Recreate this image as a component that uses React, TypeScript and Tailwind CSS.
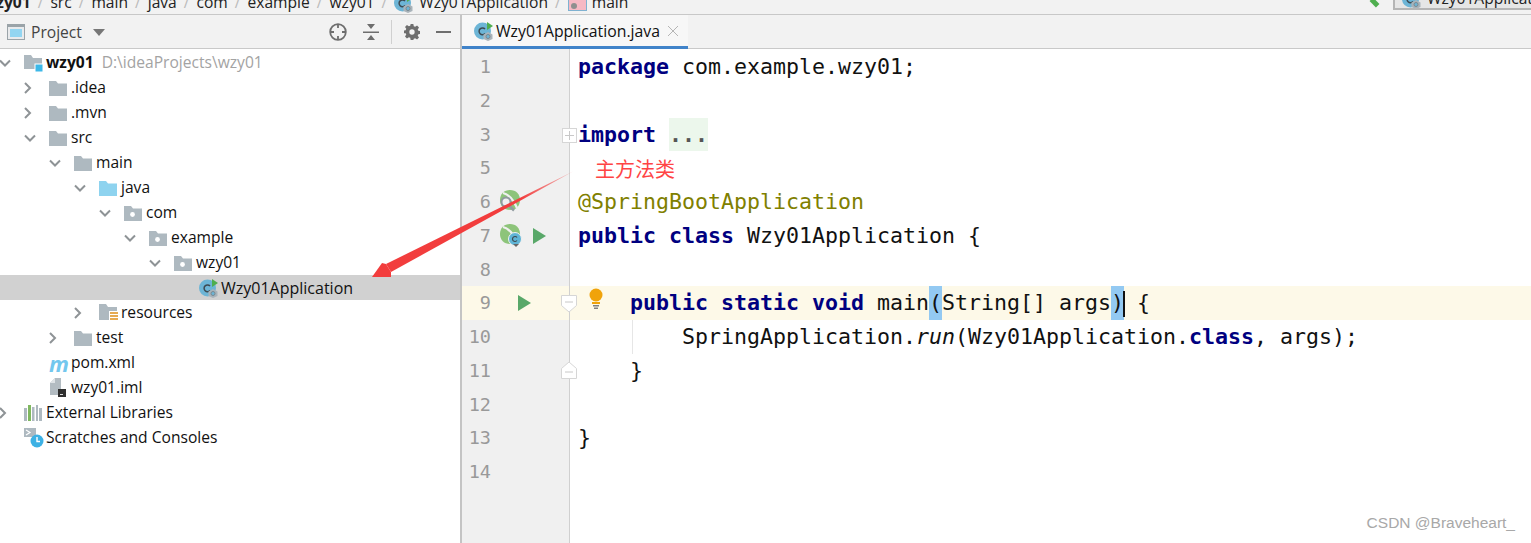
import type { ReactNode } from 'react'

const uiFont = 'font-["Open_Sans","Noto_Sans_CJK_SC",sans-serif]'
const monoFont = 'font-["DejaVu_Sans_Mono",monospace]'

type IconKind = 'module' | 'folder' | 'source' | 'package' | 'app' | 'resources' | 'maven' | 'iml' | 'libs' | 'scratch'

interface TreeRow {
  label: string
  depth: number
  icon: IconKind
  open?: boolean
  leaf?: boolean
  hint?: string
  bold?: boolean
  selected?: boolean
}

const rows: TreeRow[] = [
  { label: 'wzy01', depth: 0, icon: 'module', open: true, bold: true, hint: 'D:\\ideaProjects\\wzy01' },
  { label: '.idea', depth: 1, icon: 'folder' },
  { label: '.mvn', depth: 1, icon: 'folder' },
  { label: 'src', depth: 1, icon: 'folder', open: true },
  { label: 'main', depth: 2, icon: 'folder', open: true },
  { label: 'java', depth: 3, icon: 'source', open: true },
  { label: 'com', depth: 4, icon: 'package', open: true },
  { label: 'example', depth: 5, icon: 'package', open: true },
  { label: 'wzy01', depth: 6, icon: 'package', open: true },
  { label: 'Wzy01Application', depth: 7, icon: 'app', leaf: true, selected: true },
  { label: 'resources', depth: 3, icon: 'resources' },
  { label: 'test', depth: 2, icon: 'folder' },
  { label: 'pom.xml', depth: 1, icon: 'maven', leaf: true },
  { label: 'wzy01.iml', depth: 1, icon: 'iml', leaf: true },
  { label: 'External Libraries', depth: 0, icon: 'libs' },
  { label: 'Scratches and Consoles', depth: 0, icon: 'scratch', leaf: true },
]

function Folder({ fill = '#aeb9c0', children }: { fill?: string; children?: ReactNode }) {
  return (
    <svg width="18" height="16" viewBox="0 0 18 16">
      <path d="M0 1h7l2 2.500h9V16H0z" fill={fill} />
      {children}
    </svg>
  )
}

function AppIcon() {
  return (
    <svg width="20" height="20" viewBox="0 0 20 20">
      <circle cx="8.500" cy="10" r="8.500" fill="#6db5d6" />
      <path d="M11 8a3.400 3.400 0 1 0 0 4.600" fill="none" stroke="#3d4a52" strokeWidth="1.500" />
      <path d="M13 1l6 4-6 4z" fill="#4fae4f" />
      <path d="M14 11l4.500 2.500v4.500l-4.500 2-4.500-2v-4.500z" fill="#a9b3ba" />
      <circle cx="14" cy="15.500" r="2" fill="#6db5d6" stroke="#7b8990" />
    </svg>
  )
}

function NodeIcon({ kind }: { kind: IconKind }) {
  switch (kind) {
    case 'module':
      return (
        <svg width="20" height="20" viewBox="0 0 20 20">
          <path d="M0 2h7l2 3h9v11H0z" fill="#aeb9c0" />
          <rect x="11" y="11" width="8" height="8" fill="#3db8e8" stroke="#fff" />
        </svg>
      )
    case 'folder':
      return <Folder />
    case 'source':
      return <Folder fill="#8ed3ef" />
    case 'package':
      return (
        <Folder>
          <circle cx="8.500" cy="9.500" r="2.400" fill="#fff" />
        </Folder>
      )
    case 'app':
      return <AppIcon />
    case 'resources':
      return (
        <svg width="20" height="18" viewBox="0 0 20 18">
          <path d="M0 0h7l2 3h9v13H0z" fill="#aeb9c0" />
          <rect x="10" y="7" width="9" height="11" fill="#fff" />
          <path d="M11 9h8M11 12h8M11 15h8" stroke="#e5aa52" strokeWidth="1.800" />
        </svg>
      )
    case 'maven':
      return <span className="text-[22px] leading-[20px] font-bold italic text-[#73c7ee]">m</span>
    case 'iml':
      return (
        <svg width="18" height="19" viewBox="0 0 18 19">
          <path d="M1 5l5-5h6v17H1z" fill="#b3bcc2" />
          <path d="M1 5h5V0z" fill="#dfe3e6" />
          <rect x="9" y="11" width="8" height="8" fill="#2f2f2f" />
          <rect x="11" y="16" width="3" height="1" fill="#ddd" />
        </svg>
      )
    case 'libs':
      return (
        <svg width="18" height="16" viewBox="0 0 18 16">
          <rect x="0" y="3" width="3" height="13" fill="#aeb9c0" />
          <rect x="4" y="0" width="3" height="16" fill="#7fb85f" />
          <rect x="8" y="2" width="2.500" height="14" fill="#aeb9c0" />
          <rect x="12" y="0" width="2" height="16" fill="#aeb9c0" />
          <rect x="15" y="3" width="3" height="13" fill="#aeb9c0" />
        </svg>
      )
    case 'scratch':
      return (
        <svg width="20" height="20" viewBox="0 0 20 20">
          <path d="M0 0h12v9H0z" fill="#aeb9c0" />
          <path d="M2 2l4 2.500-4 2.500" fill="none" stroke="#fff" strokeWidth="1.200" />
          <circle cx="13" cy="13" r="6.500" fill="#3db1e4" />
          <path d="M13 9v4.500h3" fill="none" stroke="#fff" strokeWidth="1.400" />
        </svg>
      )
  }
}

function Chevron({ open }: { open?: boolean }) {
  return (
    <svg width="12" height="12" viewBox="0 0 12 12" fill="none" stroke="#8e9396" strokeWidth="2">
      {open ? <path d="M1 3.500l5 5 5-5" /> : <path d="M3 1l5 5-5 5" />}
    </svg>
  )
}

function Row({ row }: { row: TreeRow }) {
  return (
    <div className={`h-[25px] flex items-center overflow-hidden ${row.selected ? 'bg-[#d1d1d1]' : ''}`}>
      {/* the tree indents by 25px a level, first chevron hangs off the window edge */}
      <div className="flex items-center" style={{ marginLeft: 25 * row.depth - 8 }}>
        <div className={`w-[32px] shrink-0 flex ${row.open ? 'pl-[7px]' : 'pl-[5px]'}`}>{!row.leaf && <Chevron open={row.open} />}</div>
        <div className="w-[22px] h-[20px] shrink-0 flex items-center">
          <NodeIcon kind={row.icon} />
        </div>
        <span className={`leading-none whitespace-nowrap text-[#111] ${row.selected ? 'text-[16px]' : 'text-[15.600px]'} ${row.bold ? 'font-bold' : ''}`}>
          {row.label}
        </span>
        {row.hint && <span className="ml-[8px] text-[15.600px] leading-none text-[#a3a3a3] whitespace-nowrap">{row.hint}</span>}
      </div>
    </div>
  )
}

function ProjectHeader() {
  return (
    <div className="h-[34px] bg-[#f2f2f2] border-b border-[#c9c9c9] flex items-center">
      <svg className="ml-[7px]" width="18" height="16" viewBox="0 0 18 16">
        <rect x="0.500" y="0.500" width="17" height="15" fill="#e8eaec" stroke="#9aa3a8" />
        <rect x="0" y="0" width="18" height="3" fill="#9aa3a8" />
        <rect x="3" y="5" width="12" height="8" fill="#92d5f1" />
      </svg>
      <span className="ml-[6px] mt-[2px] text-[15.600px] text-[#444]">Project</span>
      <svg className="ml-[11px] mt-[2px]" width="12" height="7" viewBox="0 0 12 7">
        <path d="M0 0h12L6 7z" fill="#777" />
      </svg>
      <div className="ml-auto flex items-center mr-[9px]">
        <svg width="18" height="18" viewBox="0 0 18 18" fill="none" stroke="#6e6e6e" strokeWidth="1.800">
          <circle cx="9" cy="9" r="7.800" />
          <path d="M9 1v4M9 13v4M1 9h4M13 9h4" />
        </svg>
        <svg className="ml-[16px]" width="16" height="16" viewBox="0 0 16 16">
          <path d="M0 7.500h16v1.500H0z" fill="#6e6e6e" />
          <path d="M4 0h8L8 5zM4 16h8l-4-5z" fill="#6e6e6e" />
        </svg>
        <div className="ml-[12px] h-[24px] w-px bg-[#d0d0d0]" />
        <svg className="ml-[12px]" width="16" height="16" viewBox="0 0 24 24">
          <path
            fillRule="evenodd"
            fill="#6e6e6e"
            d="M10 0h4l.7 3.300 2 .9 2.900-1.900 2.900 2.900-1.900 2.900.9 2 3.300.7v4l-3.300.7-.9 2 1.900 2.900-2.900 2.900-2.900-1.900-2 .9L14 24h-4l-.7-3.300-2-.9-2.900 1.900-2.900-2.900 1.900-2.900-.9-2L-.8 14v-4l3.300-.7.9-2-1.900-2.900 2.900-2.900 2.900 1.900 2-.9zM12 8a4 4 0 1 0 0 8 4 4 0 0 0 0-8z"
          />
        </svg>
        <div className="ml-[16px] w-[15px] h-[2px] bg-[#6e6e6e]" />
      </div>
    </div>
  )
}

function EditorTab() {
  return (
    <div className="h-[34px] bg-[#f2f2f2] flex">
      <div className="w-[226px] bg-[#f7f7f7] border-b-[3px] border-[#4083c9] flex items-center pl-[12px]">
        <AppIcon />
        <span className="ml-[2px] mt-[3px] text-[15.800px] text-[#111] whitespace-nowrap">Wzy01Application.java</span>
        <svg className="ml-[8px]" width="10" height="10" viewBox="0 0 10 10" stroke="#b5b5b5" strokeWidth="1">
          <path d="M0 0l10 10M10 0L0 10" />
        </svg>
      </div>
      <div className="flex-1 border-b border-[#c9c9c9]" />
    </div>
  )
}

const kw = 'font-bold text-[#000080]'

// import block is folded, so the gutter goes 3 then 5
const code: { line: number; text: ReactNode }[] = [
  { line: 1, text: <><span className={kw}>package</span> com.example.wzy01;</> },
  { line: 2, text: null },
  { line: 3, text: <><span className={kw}>import</span> <span className="bg-[#ecf7ec] inline-block h-[33px] align-top font-bold text-[#555]">...</span></> },
  { line: 5, text: <span className={`${uiFont} relative top-[2px] ml-[17px] text-[20px] text-[#f44]`}>主方法类</span> },
  { line: 6, text: <span className="text-[#808000]">@SpringBootApplication</span> },
  { line: 7, text: <><span className={kw}>public class</span> Wzy01Application {'{'}</> },
  { line: 8, text: null },
  {
    line: 9,
    text: (
      <>
        {'    '}<span className={kw}>public static void</span> main<span className="bg-[#93c9f2] inline-block h-[34px] align-top">(</span>String[] args
        <span className="bg-[#93c9f2] inline-block h-[34px] align-top">)</span>
        <span className="inline-block w-[2px] h-[26px] ml-[-1px] mr-[-1px] bg-[#111] align-middle" /> {'{'}
      </>
    ),
  },
  {
    line: 10,
    text: (
      <>
        {'        '}SpringApplication.<span className="italic">run</span>(Wzy01Application.<span className={kw}>class</span>, args);
      </>
    ),
  },
  { line: 11, text: <>{'    }'}</> },
  { line: 12, text: null },
  { line: 13, text: <>{'}'}</> },
  { line: 14, text: null },
]

function Play({ className }: { className: string }) {
  return (
    <svg className={`absolute ${className}`} width="13" height="16" viewBox="0 0 13 16">
      <path d="M0 0l13 8-13 8z" fill="#59a869" />
    </svg>
  )
}

function SpringLeaf({ className, badge }: { className: string; badge?: boolean }) {
  return (
    <svg className={`absolute ${className}`} width="24" height="24" viewBox="0 0 24 24">
      <path d="M11 1c6 0 10 4 10 10s-4 10-10 10S1 17 1 11 5 1 11 1z" fill="#8dc47a" />
      <path d="M4 4c5 1 11 7 14 15" fill="none" stroke="#f0f0f0" strokeWidth="2.200" />
      {badge ? (
        <>
          <circle cx="16" cy="16" r="6.500" fill="#5fb4d6" stroke="#f0f0f0" />
          <path d="M18 14.500a2.500 2.500 0 1 0 0 3" fill="none" stroke="#3d4a52" strokeWidth="1.200" />
          <path d="M14 21h6l-3 3z" fill="#666" />
        </>
      ) : (
        <>
          <circle cx="7" cy="13" r="4.500" fill="#f0f0f0" stroke="#8f9a9f" strokeWidth="2" />
          <path d="M10 16.500l5 5" stroke="#8f9a9f" strokeWidth="2.500" />
        </>
      )}
    </svg>
  )
}

function Gutter({ line }: { line: number }) {
  return (
    <div className={`relative w-[108px] shrink-0 border-r border-[#d0d0d0] ${line === 9 ? 'bg-[#fdf9e8]' : 'bg-[#f0f0f0]'}`}>
      <span className={`absolute right-[78px] top-[4px] ${monoFont} text-[18.500px] leading-[26px] text-[#999]`}>{line}</span>
      {line === 3 && (
        <svg className="absolute left-[100px] top-[10px]" width="15" height="15" viewBox="0 0 15 15">
          <rect x="0.500" y="0.500" width="14" height="14" fill="#fff" stroke="#d6d6d6" />
          <path d="M3 7.500h9M7.500 3v9" stroke="#c8c8c8" />
        </svg>
      )}
      {line === 6 && <SpringLeaf className="left-[37px] top-[4px]" />}
      {line === 7 && (
        <>
          <SpringLeaf className="left-[37px] top-[4px]" badge />
          <Play className="left-[71px] top-[9px]" />
        </>
      )}
      {line === 9 && (
        <>
          <Play className="left-[56px] top-[9px]" />
          <svg className="absolute left-[99px] top-[9px]" width="16" height="18" viewBox="0 0 16 18">
            <path d="M.5.500h15v10L8 17 .5 10.500z" fill="#fff" stroke="#d6d6d6" />
            <path d="M4 7h8" stroke="#c8c8c8" />
          </svg>
          <svg className="absolute left-[126px] top-[2px]" width="16" height="21" viewBox="0 0 16 21">
            <circle cx="8" cy="7" r="6.500" fill="#f0a30a" />
            <path d="M4 14h8v2H4z" fill="#f0a30a" />
            <path d="M5 17h6v1.500H5zM6 19.500h4V21H6z" fill="#7f7f7f" />
          </svg>
        </>
      )}
      {line === 11 && (
        <svg className="absolute left-[99px] top-[7px]" width="16" height="18" viewBox="0 0 16 18">
          <path d="M.5 17.500h15v-10L8 1 .5 7.500z" fill="#fff" stroke="#d6d6d6" />
          <path d="M4 11h8" stroke="#c8c8c8" />
        </svg>
      )}
    </div>
  )
}

function Editor() {
  return (
    <div className={`${monoFont} text-[21.600px] leading-[33.750px] text-[#111] whitespace-pre`}>
      <div className="h-[1px] w-[108px] bg-[#f0f0f0] border-r border-[#d0d0d0]" />
      {code.map(c => (
        <div key={c.line} className={`relative h-[33.750px] flex ${c.line === 9 ? 'bg-[#fdf9e8]' : ''}`}>
          <Gutter line={c.line} />
          <div className="pl-[8px] relative">
            {c.line === 10 && <div className="absolute left-[62px] top-0 h-full w-px bg-[#e6e6e6]" />}
            {c.text}
          </div>
        </div>
      ))}
    </div>
  )
}

function Breadcrumb() {
  return (
    <div className="h-[15px] bg-[#f2f2f2] border-b border-[#c8c8c8] flex items-end overflow-hidden">
      {/* only the lower edge of the nav bar is in the shot */}
      <div className="flex items-center h-[20px] mb-[1px] text-[15.600px] text-[#222] whitespace-nowrap">
        <span className="ml-[-17px] font-bold">wzy01</span>
        {['src', 'main', 'java', 'com', 'example', 'wzy01'].map((s, i) => (
          <span key={i} className="flex items-center">
            <span className="mx-[7px] text-[#bbb]">/</span>
            {s}
          </span>
        ))}
        <span className="mx-[7px] text-[#bbb]">/</span>
        <AppIcon />
        <span className="ml-[5px]">Wzy01Application</span>
        <span className="mx-[7px] text-[#bbb]">/</span>
        <svg width="19" height="16" viewBox="0 0 19 16">
          <rect x="0.500" y="0.500" width="18" height="15" fill="#f6b9c4" stroke="#7fb2d1" />
          <circle cx="6" cy="11" r="3" fill="#8f8f8f" />
        </svg>
        <span className="ml-[5px]">main</span>
      </div>
      <div className="ml-auto flex items-end">
        <div className="w-[9px] h-[5px] mb-[9px] bg-[#4fae4f] rotate-[45deg]" />
        <div className="ml-[14px] mb-[4px] h-[10px] w-[138px] bg-[#e6e6e6] border-l-2 border-b-2 border-[#b5b5b5] flex items-end overflow-hidden whitespace-nowrap text-[15.600px] text-[#222]">
          <div className="flex items-center mb-[-1px] pl-[7px] h-[20px]">
            <AppIcon />
            <span className="ml-[5px]">Wzy01Application</span>
          </div>
        </div>
      </div>
    </div>
  )
}

export default function App() {
  return (
    <div className={`relative w-[1531px] h-[543px] overflow-hidden bg-white ${uiFont}`}>
      <Breadcrumb />

      <div className="flex h-[528px]">
        <div className="w-[462px] shrink-0 border-r-2 border-[#c4c4c4]">
          <ProjectHeader />
          <div className="pt-[1px]">
            {rows.map((r, i) => (
              <Row key={i} row={r} />
            ))}
          </div>
        </div>
        <div className="flex-1 flex flex-col min-w-0">
          <EditorTab />
          <Editor />
          <div className="flex-1 flex">
            <div className="w-[108px] bg-[#f0f0f0] border-r border-[#d0d0d0]" />
          </div>
        </div>
      </div>

      {/* annotation arrow drawn over the screenshot */}
      <svg className="absolute left-0 top-0 pointer-events-none" width="1531" height="543" viewBox="0 0 1531 543">
        <defs>
          <linearGradient id="tail" x1="572" y1="172" x2="400" y2="262" gradientUnits="userSpaceOnUse">
            <stop offset="0" stopColor="#f23d3d" stopOpacity="0.300" />
            <stop offset="0.300" stopColor="#f23d3d" />
          </linearGradient>
        </defs>
        <path d="M573 171.500L386 264l5 8z" fill="url(#tail)" />
        <path d="M372 277l10-14 4 1 5 8 0 5z" fill="#f23d3d" />
      </svg>

      <div className="absolute right-[16px] bottom-[9px] font-['Liberation_Sans',sans-serif] text-[15.500px] text-[#a8a8a8]">
        CSDN @Braveheart_
      </div>
    </div>
  )
}
